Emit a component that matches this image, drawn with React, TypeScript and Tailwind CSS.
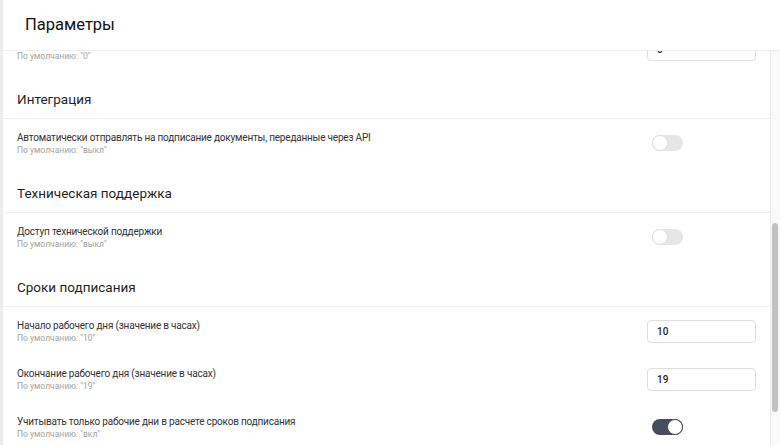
import React from "react";

function Toggle({ on }: { on: boolean }) {
  return (
    <div
      className={
        "relative ml-[5px] h-[16px] w-[31px] rounded-full " +
        (on ? "bg-[#474d5d]" : "bg-[#e6e6e6]")
      }
    >
      <div
        className={
          "absolute top-0 h-[16px] w-[16px] rounded-full border bg-white " +
          (on ? "right-0 border-[#474d5d]" : "left-0 border-[#e0e0e0]")
        }
      />
    </div>
  );
}

function Input({ value }: { value: string }) {
  return (
    <div className="flex h-[23px] w-[109px] items-center rounded-[4px] border border-[#dedede] bg-white pl-[9px] text-[10px] font-medium text-[#222]">
      {value}
    </div>
  );
}

function Row({
  title,
  def,
  control,
}: {
  title: string;
  def: string;
  control: React.ReactNode;
}) {
  return (
    <div className="flex h-[48px] items-center justify-between pl-[14px] pr-[14px]">
      <div className="flex flex-col">
        <div className="text-[10px] leading-[13px] tracking-[-0.2px] text-[#333]">{title}</div>
        <div className="text-[8.5px] leading-[12px] text-[#a3a3a3]">{def}</div>
      </div>
      <div className="w-[109px]">{control}</div>
    </div>
  );
}

function Section({ title }: { title: string }) {
  return (
    <div className="border-b border-[#efefef] pb-[9px] pl-[14px] pt-[16px] text-[13.5px] leading-[20px] text-[#1f1f1f]">
      {title}
    </div>
  );
}

export default function App() {
  return (
    <div
      className="flex h-[445px] w-[780px] overflow-hidden bg-white"
      style={{ fontFamily: 'Roboto, "Noto Sans", sans-serif' }}
    >
      <div className="w-[3px] shrink-0 bg-[#ececec]" />
      <div className="flex min-w-0 flex-1 flex-col">
        <div className="flex h-[51px] shrink-0 items-center border-b border-[#efefef] pl-[22px] text-[16.5px] text-[#111]">
          Параметры
        </div>
        <div className="flex min-h-0 flex-1">
          <div className="min-w-0 flex-1 overflow-hidden">
            <div className="-mt-[26px]">
              <Row title="Часовой пояс" def='По умолчанию: "0"' control={<Input value="0" />} />
              <Section title="Интеграция" />
              <Row
                title="Автоматически отправлять на подписание документы, переданные через API"
                def='По умолчанию: "выкл"'
                control={<Toggle on={false} />}
              />
              <Section title="Техническая поддержка" />
              <Row
                title="Доступ технической поддержки"
                def='По умолчанию: "выкл"'
                control={<Toggle on={false} />}
              />
              <Section title="Сроки подписания" />
              <Row
                title="Начало рабочего дня (значение в часах)"
                def='По умолчанию: "10"'
                control={<Input value="10" />}
              />
              <Row
                title="Окончание рабочего дня (значение в часах)"
                def='По умолчанию: "19"'
                control={<Input value="19" />}
              />
              <Row
                title="Учитывать только рабочие дни в расчете сроков подписания"
                def='По умолчанию: "вкл"'
                control={<Toggle on={true} />}
              />
            </div>
          </div>
          <div className="w-[10px] shrink-0 border-l border-[#ececec] bg-[#f9f9f9] pl-[1px] pr-[1px]">
            <div className="mt-[172px] h-[189px] w-[6px] rounded-full bg-[#c1c1c1]" />
          </div>
        </div>
      </div>
    </div>
  );
}
